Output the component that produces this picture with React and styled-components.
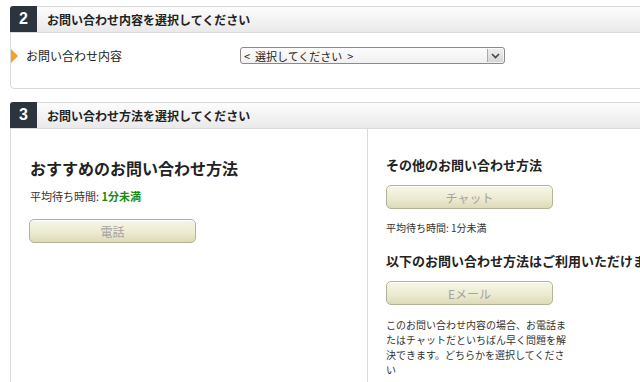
import React from 'react';
import styled, { createGlobalStyle } from 'styled-components';

const GlobalStyle = createGlobalStyle`
  html, body {
    margin: 0;
    padding: 0;
    background: #fff;
    overflow: hidden;
  }
  body {
    font-family: "Noto Sans CJK JP", "Liberation Sans", sans-serif;
    color: #333;
  }
`;

const Page = styled.div`
  width: 640px;
  height: 382px;
  overflow: hidden;
  padding: 6px 0 0 10px;
  box-sizing: border-box;
`;

const Section = styled.section`
  width: 680px;
  border: 1px solid #d9d9d9;
  border-radius: 4px;
  margin-bottom: 13px;
  background: #fff;
`;

const Header = styled.div`
  display: flex;
  align-items: center;
  height: 25px;
  background: linear-gradient(#fdfdfd, #e9e9e9);
  border-bottom: 1px solid #dcdcdc;
`;

const Num = styled.div`
  width: 27px;
  height: 26px;
  margin: -1px 0 0 -1px;
  border-radius: 3px 0 0 0;
  background: #2c343e;
  color: #fff;
  font: bold 16px "Liberation Sans", Arial, sans-serif;
  display: flex;
  align-items: center;
  justify-content: center;
`;

const Title = styled.div`
  margin-left: 10px;
  font-size: 12px;
  font-weight: bold;
  color: #222;
`;

const Row = styled.div`
  display: flex;
  align-items: center;
  height: 17px;
  padding: 14px 0 24px;
`;

const Marker = styled.span`
  width: 0;
  height: 0;
  border-left: 7px solid #f2a12a;
  border-top: 7px solid transparent;
  border-bottom: 7px solid transparent;
  margin-right: 8px;
`;

const Label = styled.span`
  width: 214px;
  font-size: 12px;
  color: #222;
`;

const Select = styled.div`
  display: flex;
  align-items: center;
  justify-content: space-between;
  width: 260px;
  height: 15px;
  border: 1px solid #8a8a8a;
  border-radius: 3px;
  background: linear-gradient(#fcfcfc, #f0f0f0);
  font-size: 11px;
  color: #222;
  padding-left: 3px;
  box-sizing: content-box;
  white-space: pre;
`;

const Arrow = styled.span`
  width: 15px;
  height: 13px;
  margin-right: 1px;
  border-left: 1px solid #aaa;
  background: linear-gradient(#eee, #d6d6d6);
  display: flex;
  align-items: center;
  justify-content: center;
`;

const Columns = styled.div`
  display: flex;
  height: 260px;
`;

const Left = styled.div`
  width: 337px;
  padding: 27px 0 0 19px;
`;

const Right = styled.div`
  flex: 1;
  border-left: 1px solid #d9d9d9;
  padding: 26px 0 0 18px;
`;

const BigHeading = styled.h2`
  margin: 0;
  font-size: 16px;
  font-weight: bold;
  color: #222;
  line-height: 24px;
`;

const SubHeading = styled.h3`
  margin: ${p => p.$m || '0'};
  font-size: 13px;
  font-weight: bold;
  color: #222;
  line-height: 20px;
  white-space: nowrap;
`;

const Wait = styled.p`
  margin: ${p => p.$m};
  font-size: ${p => p.$size}px;
  color: #333;
  line-height: 16px;
`;

const Fast = styled.span`
  color: ${p => (p.$green ? '#1c8a10' : '#333')};
  font-weight: ${p => (p.$green ? 'bold' : 'normal')};
`;

const Button = styled.div`
  width: 165px;
  height: 22px;
  margin: ${p => p.$m};
  border: 1px solid #b3b296;
  border-radius: 5px;
  background: linear-gradient(#f7f6e8, #eceacf 60%, #dcdab8);
  box-shadow: inset 0 1px 0 #fff;
  color: #a3a3a3;
  font-size: 12px;
  display: flex;
  align-items: center;
  justify-content: center;
`;

const Note = styled.p`
  width: 181px;
  margin: 12px 0 0;
  font-size: 10px;
  line-height: 15px;
  color: #333;
`;

export default function App() {
  return (
    <Page>
      <GlobalStyle />
      <Section>
        <Header>
          <Num>2</Num>
          <Title>お問い合わせ内容を選択してください</Title>
        </Header>
        <Row>
          <Marker />
          <Label>お問い合わせ内容</Label>
          <Select>
            <span>{'<  選択してください  >'}</span>
            <Arrow>
              <svg width="9" height="6" viewBox="0 0 9 6">
                <path d="M1 1 L4.5 4.5 L8 1" fill="none" stroke="#444" strokeWidth="1.6" />
              </svg>
            </Arrow>
          </Select>
        </Row>
      </Section>
      <Section>
        <Header>
          <Num>3</Num>
          <Title>お問い合わせ方法を選択してください</Title>
        </Header>
        <Columns>
          <Left>
            <BigHeading>おすすめのお問い合わせ方法</BigHeading>
            <Wait $size={11} $m="8px 0 0">
              平均待ち時間: <Fast $green>1分未満</Fast>
            </Wait>
            <Button $m="15px 0 0 -1px">電話</Button>
          </Left>
          <Right>
            <SubHeading>その他のお問い合わせ方法</SubHeading>
            <Button $m="10px 0 0">チャット</Button>
            <Wait $size={10} $m="11px 0 0">
              平均待ち時間: <Fast>1分未満</Fast>
            </Wait>
            <SubHeading $m="15px 0 0">以下のお問い合わせ方法はご利用いただけません</SubHeading>
            <Button $m="10px 0 0">Eメール</Button>
            <Note>
              このお問い合わせ内容の場合、お電話またはチャットだといちばん早く問題を解決できます。どちらかを選択してください
            </Note>
          </Right>
        </Columns>
      </Section>
    </Page>
  );
}
